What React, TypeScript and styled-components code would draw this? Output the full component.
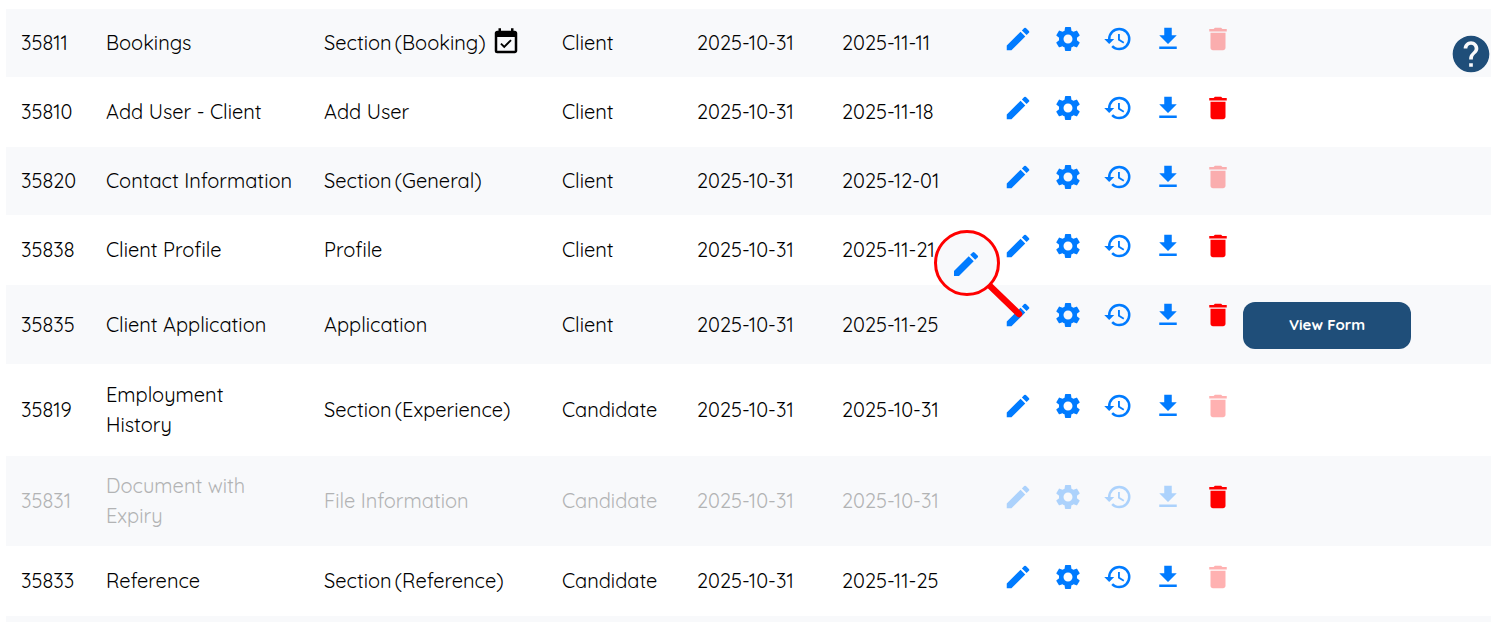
import React from "react";
import styled, { createGlobalStyle } from "styled-components";
import {
  MdDelete,
  MdDownload,
  MdEdit,
  MdEventAvailable,
  MdHelp,
  MdSettings,
} from "react-icons/md";

const GlobalStyle = createGlobalStyle`
  *, *::before, *::after { box-sizing: border-box; }
  body {
    margin: 0;
    background: #fff;
    color: #000;
    font-family: Quicksand, Lato, "Open Sans", sans-serif;
    font-size: 20px;
    font-weight: 400;
    line-height: 30px;
  }
`;

const Page = styled.main`
  height: 100vh;
  overflow: hidden;
  padding: 9px 14px 0 6px;
`;

const Table = styled.table`
  width: 100%;
  table-layout: fixed;
  border-collapse: separate;
  border-spacing: 0;
`;

const Col = styled.col<{ $width?: number }>`
  width: ${(p) => (p.$width ? `${p.$width}px` : "auto")};
`;

const Row = styled.tr`
  height: 69px;
  &:nth-child(odd) td {
    background: #f8f9fb;
  }
`;

const Cell = styled.td<{ $muted?: boolean }>`
  padding: 15px 0 15px 15px;
  border-bottom: 1px solid #fff;
  vertical-align: middle;
  white-space: pre-line;
  color: ${(p) => (p.$muted ? "#b2b3b4" : "inherit")};
`;

const TypeLabel = styled.div`
  display: flex;
  align-items: center;
  white-space: nowrap;
  svg {
    margin: -2px 0 0 5px;
    color: #000;
  }
`;

const Area = styled.span`
  margin-left: 3px;
`;

const Actions = styled.div`
  display: flex;
  align-items: flex-start;
  gap: 10px;
`;

const IconGroup = styled.div`
  display: flex;
  gap: 20px;
  padding-bottom: 8px;
`;

const IconButton = styled.button<{ $danger?: boolean }>`
  position: relative;
  display: block;
  width: 30px;
  height: 30px;
  padding: 0;
  border: 0;
  background: none;
  color: ${(p) => (p.$danger ? "#f00" : "#007bff")};
  cursor: pointer;
  &:disabled {
    opacity: 0.3;
    cursor: default;
  }
  > svg {
    display: block;
  }
`;

const ViewButton = styled.button`
  width: 168px;
  height: 47px;
  margin-top: 2px;
  padding: 0 0 2px;
  border: 0;
  border-radius: 12px;
  background: #1f4e79;
  color: #fff;
  font-family: inherit;
  font-size: 15px;
  font-weight: 700;
  cursor: pointer;
`;

const HelpButton = styled.button`
  position: fixed;
  top: 32px;
  right: 12px;
  padding: 0;
  border: 0;
  background: none;
  color: #1f4e79;
  cursor: pointer;
  svg {
    display: block;
  }
`;

const Lens = styled.svg`
  position: absolute;
  left: -70px;
  top: -71px;
  z-index: 1;
  pointer-events: none;
`;

const HistoryIcon = () => (
  <svg width="30" height="30" viewBox="0 0 24 24" fill="currentColor" aria-hidden="true">
    <path d="M13.5 8H12v5l4.28 2.54.72-1.21-3.5-2.08V8M13 3a9 9 0 0 0-9 9H1l3.96 4.03L9 12H6a7 7 0 0 1 7-7 7 7 0 0 1 7 7 7 7 0 0 1-7 7c-1.93 0-3.68-.79-4.94-2.06l-1.42 1.42A8.9 8.9 0 0 0 13 21a9 9 0 0 0 9-9 9 9 0 0 0-9-9" />
  </svg>
);

const EditLens = () => (
  <Lens width="96" height="96" viewBox="0 0 96 96" aria-hidden="true">
    <path d="M56 56L86 85" stroke="#f00" strokeWidth="6.5" strokeLinecap="round" />
    <circle cx="34" cy="34" r="31.5" fill="#f8f9fb" stroke="#f00" strokeWidth="3" />
    <g transform="translate(17 19) scale(1.3333)">
      <path
        fill="#007bff"
        d="M3 17.25V21h3.75L17.81 9.94l-3.75-3.75L3 17.25zM20.71 7.04a.996.996 0 0 0 0-1.41l-2.34-2.34a.996.996 0 0 0-1.41 0l-1.83 1.83 3.75 3.75 1.83-1.83z"
      />
    </g>
  </Lens>
);

interface Form {
  id: number;
  name: string;
  type: string;
  area?: string;
  booking?: boolean;
  user: string;
  created: string;
  updated: string;
  deletable?: boolean;
  inactive?: boolean;
  viewable?: boolean;
}

const forms: Form[] = [
  { id: 35811, name: "Bookings", type: "Section", area: "(Booking)", booking: true, user: "Client", created: "2025-10-31", updated: "2025-11-11" },
  { id: 35810, name: "Add User - Client", type: "Add User", user: "Client", created: "2025-10-31", updated: "2025-11-18", deletable: true },
  { id: 35820, name: "Contact Information", type: "Section", area: "(General)", user: "Client", created: "2025-10-31", updated: "2025-12-01" },
  { id: 35838, name: "Client Profile", type: "Profile", user: "Client", created: "2025-10-31", updated: "2025-11-21", deletable: true },
  { id: 35835, name: "Client Application", type: "Application", user: "Client", created: "2025-10-31", updated: "2025-11-25", deletable: true, viewable: true },
  { id: 35819, name: "Employment\nHistory", type: "Section", area: "(Experience)", user: "Candidate", created: "2025-10-31", updated: "2025-10-31" },
  { id: 35831, name: "Document with\nExpiry", type: "File Information", user: "Candidate", created: "2025-10-31", updated: "2025-10-31", deletable: true, inactive: true },
  { id: 35833, name: "Reference", type: "Section", area: "(Reference)", user: "Candidate", created: "2025-10-31", updated: "2025-11-25" },
];

const columnWidths = [85, 218, 238, 135, 145, 161];

const FormRow = ({ form }: { form: Form }) => (
  <Row>
    <Cell $muted={form.inactive}>{form.id}</Cell>
    <Cell $muted={form.inactive}>{form.name}</Cell>
    <Cell $muted={form.inactive}>
      <TypeLabel>
        {form.type}
        {form.area && <Area>{form.area}</Area>}
        {form.booking && <MdEventAvailable size={30} />}
      </TypeLabel>
    </Cell>
    <Cell $muted={form.inactive}>{form.user}</Cell>
    <Cell $muted={form.inactive}>{form.created}</Cell>
    <Cell $muted={form.inactive}>{form.updated}</Cell>
    <Cell>
      <Actions>
        <IconGroup>
          <IconButton aria-label="Edit" disabled={form.inactive}>
            <MdEdit size={30} />
            {form.viewable && <EditLens />}
          </IconButton>
          <IconButton aria-label="Settings" disabled={form.inactive}>
            <MdSettings size={30} />
          </IconButton>
          <IconButton aria-label="History" disabled={form.inactive}>
            <HistoryIcon />
          </IconButton>
          <IconButton aria-label="Download" disabled={form.inactive}>
            <MdDownload size={30} />
          </IconButton>
          <IconButton aria-label="Delete" $danger disabled={!form.deletable}>
            <MdDelete size={30} />
          </IconButton>
        </IconGroup>
        {form.viewable && <ViewButton>View Form</ViewButton>}
      </Actions>
    </Cell>
  </Row>
);

export default function App() {
  return (
    <Page>
      <GlobalStyle />
      <Table>
        <colgroup>
          {columnWidths.map((width, i) => (
            <Col key={i} $width={width} />
          ))}
          <Col />
        </colgroup>
        <tbody>
          {forms.map((form) => (
            <FormRow key={form.id} form={form} />
          ))}
          <Row>
            <Cell colSpan={7} />
          </Row>
        </tbody>
      </Table>
      <HelpButton aria-label="Help">
        <MdHelp size={44} />
      </HelpButton>
    </Page>
  );
}
